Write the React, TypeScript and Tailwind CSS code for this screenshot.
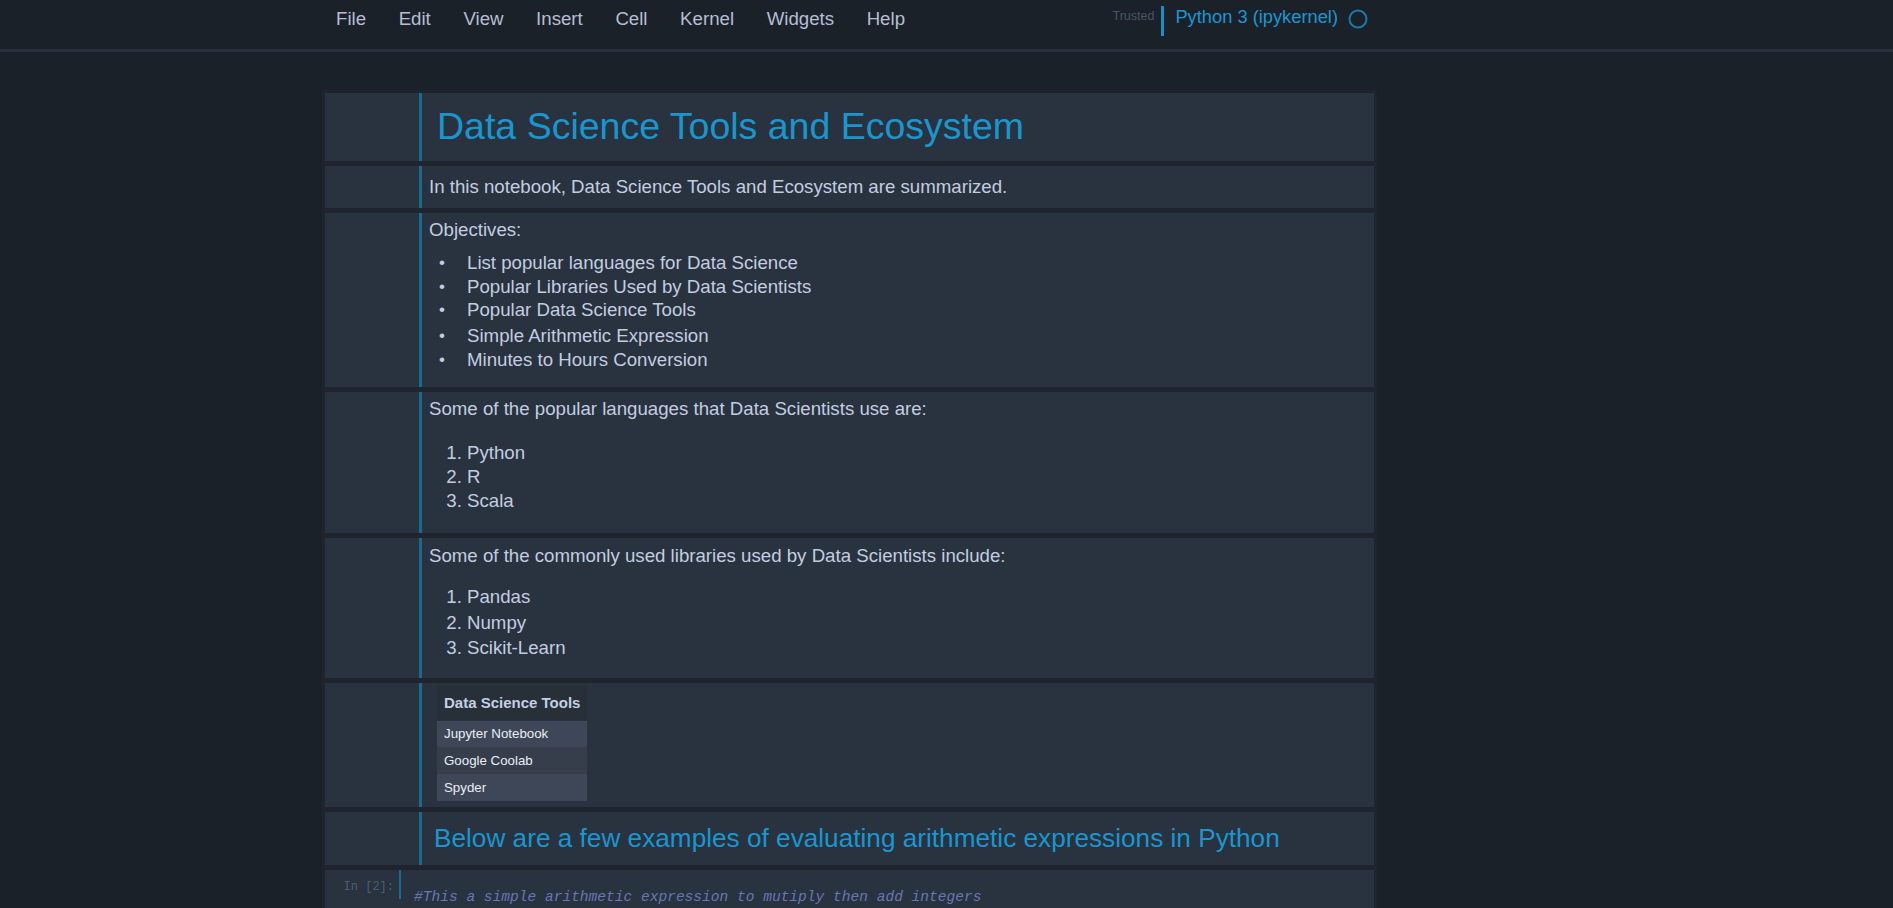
import React from 'react';

const menuItems = ['File', 'Edit', 'View', 'Insert', 'Cell', 'Kernel', 'Widgets', 'Help'];

const objectives = [
  'List popular languages for Data Science',
  'Popular Libraries Used by Data Scientists',
  'Popular Data Science Tools',
  'Simple Arithmetic Expression',
  'Minutes to Hours Conversion',
];

const languages = ['Python', 'R', 'Scala'];
const libraries = ['Pandas', 'Numpy', 'Scikit-Learn'];
const tools = ['Jupyter Notebook', 'Google Coolab', 'Spyder'];

function MdCell({ className, children }: { className: string; children: React.ReactNode }) {
  return (
    <div className={`flex bg-[#29323f] ${className}`}>
      <div className="w-[94px] shrink-0" />
      <div className="flex-1 border-l-[3px] border-[#1a6a8c]">{children}</div>
    </div>
  );
}

export default function App() {
  return (
    <div className="min-h-screen bg-[#1b2129] font-['Liberation_Sans',Arial,sans-serif] text-[18.67px] text-[#c3cde0]">
      {/* header */}
      <header className="h-[52px] border-b-[3px] border-[#2a313c]">
        <div className="ml-[322px] w-[1055px] h-[38px] flex items-center">
          <nav className="ml-[14px] flex items-center gap-[32.6px] text-[#b4bfd3]">
            {menuItems.map((m) => (
              <span key={m}>{m}</span>
            ))}
          </nav>
          <div className="ml-auto mr-[9px] flex items-center">
            <span className="text-[12.5px] text-[#4a5467] -mt-[6px]">Trusted</span>
            <div className="ml-[7px] w-[3px] h-[30px] mt-[4px] bg-[#1a8ec6]" />
            <span className="ml-[11px] text-[18.3px] text-[#1a97d2] -mt-[4px]">Python 3 (ipykernel)</span>
            <svg className="ml-[10px]" width="20" height="20" viewBox="0 0 20 20">
              <circle cx="10" cy="10" r="8.5" fill="none" stroke="#1b7ba5" strokeWidth="2" />
            </svg>
          </div>
        </div>
      </header>

      {/* notebook */}
      <main className="pt-[38px]">
        <div className="ml-[322px] w-[1055px] bg-[#1f252e] p-[3px] flex flex-col gap-[5px]">
          <MdCell className="h-[68px]">
            <h1 className="pl-[15px] h-full flex items-center text-[37.5px] leading-none text-[#1a96cf]">
              Data Science Tools and Ecosystem
            </h1>
          </MdCell>

          <MdCell className="h-[42px]">
            <p className="pl-[7px] h-full flex items-center">
              In this notebook, Data Science Tools and Ecosystem are summarized.
            </p>
          </MdCell>

          <MdCell className="h-[174px]">
            <div className="pl-[7px] pt-[6px] leading-[22px]">
              <p>Objectives:</p>
              <ul className="mt-[10px] pl-[10px]">
                {objectives.map((o, i) => (
                  <li key={o} className={`flex h-[23.7px] items-center ${i === 3 ? 'mt-[2px]' : ''}`}>
                    <span className="w-[28px] text-[17px]">•</span>
                    <span>{o}</span>
                  </li>
                ))}
              </ul>
            </div>
          </MdCell>

          <MdCell className="h-[141px]">
            <div className="pl-[7px] pt-[6px] leading-[22px]">
              <p>Some of the popular languages that Data Scientists use are:</p>
              <ol className="mt-[21px] list-decimal pl-[38px]">
                {languages.map((l) => (
                  <li key={l} className="h-[24px] leading-[24px]">{l}</li>
                ))}
              </ol>
            </div>
          </MdCell>

          <MdCell className="h-[140px]">
            <div className="pl-[7px] pt-[7px] leading-[22px]">
              <p>Some of the commonly used libraries used by Data Scientists include:</p>
              <ol className="mt-[17px] list-decimal pl-[38px]">
                {libraries.map((l) => (
                  <li key={l} className="h-[25.5px] leading-[25.5px]">{l}</li>
                ))}
              </ol>
            </div>
          </MdCell>

          <MdCell className="h-[124px]">
            <div className="pl-[15px] pt-[3px]">
              <table className="w-[150px] border-collapse text-left">
                <thead>
                  <tr className="h-[34px] bg-[#273039]">
                    <th className="pl-[7px] text-[15px] font-bold text-[#c3cfe2]">Data Science Tools</th>
                  </tr>
                </thead>
                <tbody className="text-[13.3px] text-[#e9eef6]">
                  {tools.map((t, i) => (
                    <tr
                      key={t}
                      className={`h-[27px] ${i === 0 ? 'border-t border-[#29323f]' : ''} ${
                        i % 2 === 1 ? 'bg-[#363e4b]' : 'bg-[#3e4757]'
                      }`}
                    >
                      <td className="pl-[7px]">{t}</td>
                    </tr>
                  ))}
                </tbody>
              </table>
            </div>
          </MdCell>

          <MdCell className="h-[53px]">
            <h3 className="pl-[12px] h-full flex items-center text-[26.2px] leading-none text-[#1a96cf]">
              Below are a few examples of evaluating arithmetic expressions in Python
            </h3>
          </MdCell>

          <div className="flex h-[60px] bg-[#29323f] font-['Liberation_Mono',monospace]">
            <div className="w-[76px] shrink-0 h-[29px] flex items-center justify-end pt-[4px] pr-[5px] border-r-2 border-[#1a6a8c] text-[12px] text-[#4f5c78]">
              In [2]:
            </div>
            <div className="pl-[13px] pt-[17px] text-[14.55px] italic text-[#6877b2]">
              #This a simple arithmetic expression to mutiply then add integers
            </div>
          </div>
        </div>
      </main>
    </div>
  );
}
